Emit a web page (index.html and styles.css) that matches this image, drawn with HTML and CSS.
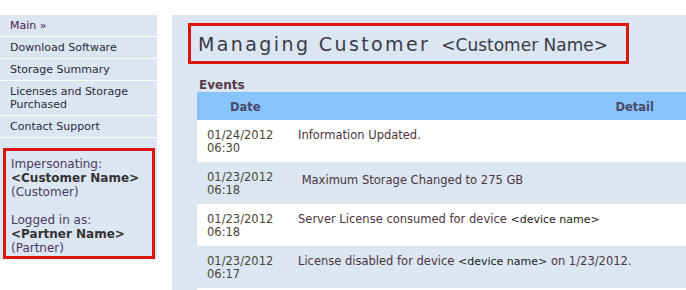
FILE: index.html
```html
<!DOCTYPE html>
<html lang="en">
<head>
    <meta charset="UTF-8">
    <title>Managing Customer</title>
    <link rel="stylesheet" href="styles.css">
</head>
<body>
    <div class="page">
        <!-- Sidebar -->
        <aside class="sidebar">
            <ul class="nav">
                <li><a href="#" class="current">Main &raquo;</a></li>
                <li><a href="#">Download Software</a></li>
                <li><a href="#">Storage Summary</a></li>
                <li><a href="#">Licenses and Storage Purchased</a></li>
                <li><a href="#">Contact Support</a></li>
            </ul>
            <div class="session">
                <div class="session-box">
                    <p>Impersonating:<br><b>&lt;Customer Name&gt;</b><br>(Customer)</p>
                    <p>Logged in as:<br><b>&lt;Partner Name&gt;</b><br>(Partner)</p>
                </div>
            </div>
        </aside>

        <!-- Main content -->
        <main class="content">
            <h1 class="title"><span class="title-main">Managing Customer</span> <span class="title-name">&lt;Customer Name&gt;</span></h1>
            <h2 class="section">Events</h2>
            <table class="events">
                <thead>
                    <tr><th class="col-date">Date</th><th class="col-detail">Detail</th></tr>
                </thead>
                <tbody>
                    <tr><td>01/24/2012<br>06:30</td><td>Information Updated.</td></tr>
                    <tr class="alt"><td>01/23/2012<br>06:18</td><td class="lower">&nbsp;Maximum Storage Changed to 275 GB</td></tr>
                    <tr><td>01/23/2012<br>06:18</td><td>Server License consumed for device <span class="dev">&lt;device name&gt;</span></td></tr>
                    <tr class="alt"><td>01/23/2012<br>06:17</td><td>License disabled for device <span class="dev">&lt;device name&gt;</span> on 1/23/2012.</td></tr>
                    <tr><td>&nbsp;</td><td>&nbsp;</td></tr>
                </tbody>
            </table>
        </main>
    </div>
</body>
</html>
```

FILE: styles.css
```css
* {
    margin: 0;
    padding: 0;
    box-sizing: border-box;
}

body {
    background: #fff;
    font-family: "DejaVu Sans", Verdana, sans-serif;
    font-size: 11px;
    color: #3c3c50;
    overflow: hidden;
}

.page {
    display: flex;
    padding-top: 15px;
    gap: 15px;
    height: 290px;
    overflow: hidden;
}

/* Sidebar */
.sidebar {
    width: 157px;
    flex-shrink: 0;
}

.nav {
    list-style: none;
}

.nav li {
    background: #dce6f2;
    border-bottom: 1px solid #fff;
}

.nav a {
    display: block;
    padding: 4px 10px 4px 10px;
    line-height: 13px;
    color: #2a2a3a;
    text-decoration: none;
}

.nav a.current {
    color: #4a1850;
}

.session {
    background: #dce6f2;
    padding: 10px 0 0 0;
}

.session-box {
    border: 3px solid #d8160c;
    margin-left: 3px;
    margin-right: 2px;
    padding: 6px 0 0 5px;
    height: 111px;
    color: #4a3a60;
    line-height: 14px;
    font-size: 12px;
}

.session-box p {
    margin-bottom: 14px;
}

.session-box b {
    color: #333;
}

/* Content */
.content {
    flex: 1;
    background: #dce6f2;
    padding: 8px 0 0 25px;
    overflow: hidden;
}

.title {
    display: inline-block;
    border: 3px solid #d8160c;
    margin-left: -9px;
    padding: 5px 18px 5px 7px;
    font-weight: normal;
    color: #3a3a48;
    white-space: nowrap;
}

.title-main {
    font-size: 19px;
    letter-spacing: 2.4px;
}

.title-name {
    font-size: 17px;
    margin-left: 4px;
}

.section {
    font-size: 12px;
    font-weight: bold;
    color: #553b42;
    margin-top: 14px;
    padding-left: 2px;
    line-height: 14px;
}

.events {
    width: 100%;
    border-collapse: collapse;
    font-size: 11.5px;
}

.events th {
    background: #88c4fc;
    color: #474a66;
    font-weight: bold;
    height: 28px;
    padding-top: 2px;
}

.events th.col-date {
    text-align: left;
    padding-left: 33px;
    width: 91px;
}

.events th.col-detail {
    text-align: right;
    padding-right: 32px;
}

.events td {
    background: #fff;
    padding: 9px 0 0 10px;
    height: 42px;
    line-height: 13px;
    vertical-align: top;
    color: #4a3540;
}

.events td.lower {
    padding-top: 12px;
}

.events tr.alt td {
    background: #dce6f2;
}

.events td:first-child {
    color: #4a4636;
}

.dev {
    color: #222;
    font-size: 11px;
}
```
